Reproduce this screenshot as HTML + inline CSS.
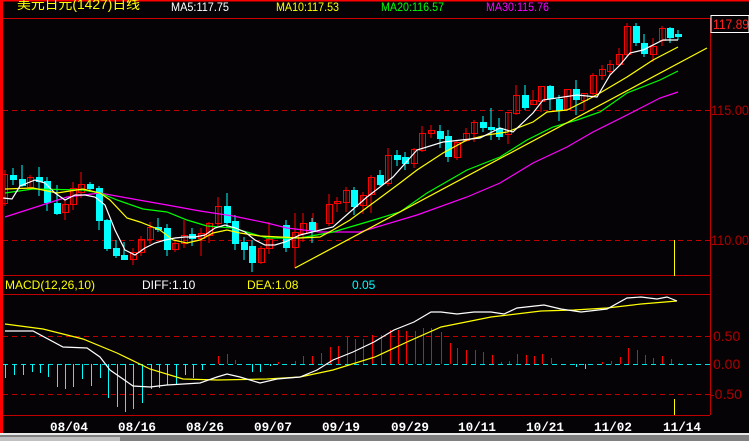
<!DOCTYPE html>
<html><head><meta charset="utf-8"><style>
html,body{margin:0;padding:0;background:#050306;}
svg{display:block}
text{font-family:"Liberation Sans","Noto Sans CJK SC",sans-serif;font-size:12px}
.d{font-family:"Liberation Mono",monospace;font-weight:bold;font-size:13px;fill:#fff}
.ax{font-size:14px}
</style></head><body>
<svg width="749" height="441" viewBox="0 0 749 441" xmlns="http://www.w3.org/2000/svg">
<rect width="749" height="441" fill="#050306"/>
<rect x="0" y="0" width="3" height="441" fill="#ff0000"/>
<rect x="0" y="0" width="749" height="1.5" fill="#ff0000"/>
<line x1="3" y1="18.5" x2="749" y2="18.5" stroke="#d00000" stroke-width="1"/>
<line x1="710.5" y1="18" x2="710.5" y2="415" stroke="#c00000"/>
<line x1="3" y1="275.5" x2="710" y2="275.5" stroke="#c00000"/>
<line x1="3" y1="294.5" x2="710" y2="294.5" stroke="#c00000"/>
<line x1="3" y1="415.5" x2="710" y2="415.5" stroke="#c00000"/>
<rect x="0" y="433" width="749" height="2" fill="#e8e8e8"/>
<rect x="0" y="435" width="749" height="6" fill="#808080"/>
<rect x="0" y="437" width="120" height="4" fill="#c0c0c0"/>
<g stroke="#c00000" stroke-dasharray="5,4">
<line x1="3" y1="110.5" x2="710" y2="110.5"/>
<line x1="3" y1="240.5" x2="710" y2="240.5"/>
<line x1="3" y1="336.5" x2="710" y2="336.5"/>
<line x1="3" y1="394.5" x2="710" y2="394.5"/>
</g>
<line x1="3" y1="364.5" x2="710" y2="364.5" stroke="#00e0e0" stroke-dasharray="5,4"/>
<text x="17" y="9" fill="#ffff00" style="font-size:14px" textLength="123" lengthAdjust="spacingAndGlyphs">美元日元(1427)日线</text>
<text x="171" y="11" fill="#ffffff" textLength="58" lengthAdjust="spacingAndGlyphs">MA5:117.75</text>
<text x="276" y="11" fill="#ffff00" textLength="63" lengthAdjust="spacingAndGlyphs">MA10:117.53</text>
<text x="381" y="11" fill="#00ff00" textLength="63" lengthAdjust="spacingAndGlyphs">MA20:116.57</text>
<text x="486" y="11" fill="#ff00ff" textLength="63" lengthAdjust="spacingAndGlyphs">MA30:115.76</text>
<rect x="711" y="15.5" width="38" height="17" fill="#050306" stroke="#ffffff"/>
<text class="ax" x="713" y="29" fill="#ff2020" textLength="36" lengthAdjust="spacingAndGlyphs">117.89</text>
<text class="ax" x="711" y="115" fill="#b00000" textLength="38" lengthAdjust="spacingAndGlyphs">115.00</text>
<text class="ax" x="711" y="245" fill="#b00000" textLength="38" lengthAdjust="spacingAndGlyphs">110.00</text>
<text class="ax" x="713" y="341" fill="#b00000">0.50</text>
<text class="ax" x="713" y="369" fill="#b00000">0.00</text>
<text class="ax" x="710" y="399" fill="#b00000">-0.50</text>
<g stroke-width="1">
<g stroke="#ff0000" fill="none">
<line x1="5" y1="170" x2="5" y2="206"/><rect x="2.5" y="174.5" width="5" height="29"/>
<line x1="30" y1="175" x2="30" y2="190"/><rect x="27.5" y="177.5" width="6" height="10"/>
<line x1="65" y1="200" x2="65" y2="220"/><rect x="62.5" y="204.5" width="6" height="8"/>
<line x1="73" y1="182" x2="73" y2="210"/><rect x="70.5" y="188.5" width="6" height="16"/>
<line x1="81" y1="172" x2="81" y2="198"/><rect x="78.5" y="184.5" width="6" height="8"/>
<line x1="133" y1="248" x2="133" y2="265"/><rect x="130.5" y="252.5" width="6" height="7"/>
<line x1="141" y1="236" x2="141" y2="256"/><rect x="138.5" y="239.5" width="6" height="13"/>
<line x1="150" y1="222" x2="150" y2="244"/><rect x="147.5" y="227.5" width="6" height="12"/>
<line x1="175" y1="240" x2="175" y2="252"/><rect x="172.5" y="243.5" width="6" height="6"/>
<line x1="184" y1="220" x2="184" y2="248"/><rect x="181.5" y="235.5" width="6" height="8"/>
<line x1="201" y1="228" x2="201" y2="256"/><rect x="198.5" y="233.5" width="6" height="5"/>
<line x1="209" y1="222" x2="209" y2="243"/><rect x="206.5" y="223.5" width="6" height="12"/>
<line x1="218" y1="197" x2="218" y2="226"/><rect x="215.5" y="206.5" width="6" height="17"/>
<line x1="261" y1="246" x2="261" y2="264"/><rect x="258.5" y="248.5" width="6" height="14"/>
<line x1="269" y1="222" x2="269" y2="254"/><rect x="266.5" y="239.5" width="6" height="9"/>
<line x1="295" y1="213" x2="295" y2="268"/><rect x="292.5" y="232.5" width="6" height="15"/>
<line x1="303" y1="213" x2="303" y2="242"/><rect x="300.5" y="223.5" width="6" height="10"/>
<line x1="313" y1="213" x2="313" y2="228"/><rect x="310.5" y="223.5" width="6" height="6"/>
<line x1="329" y1="194" x2="329" y2="226"/><rect x="326.5" y="204.5" width="6" height="19"/>
<line x1="337" y1="197" x2="337" y2="212"/><rect x="334.5" y="201.5" width="6" height="2"/>
<line x1="346" y1="187" x2="346" y2="212"/><rect x="343.5" y="190.5" width="6" height="12"/>
<line x1="363" y1="192" x2="363" y2="214"/><rect x="360.5" y="195.5" width="6" height="10"/>
<line x1="371" y1="175" x2="371" y2="213"/><rect x="368.5" y="177.5" width="6" height="17"/>
<line x1="388" y1="148" x2="388" y2="186"/><rect x="385.5" y="155.5" width="6" height="28"/>
<line x1="414" y1="148" x2="414" y2="168"/><rect x="411.5" y="149.5" width="6" height="14"/>
<line x1="422" y1="126" x2="422" y2="152"/><rect x="419.5" y="133.5" width="6" height="17"/>
<line x1="431" y1="125" x2="431" y2="138"/><rect x="428.5" y="130.5" width="6" height="3"/>
<line x1="457" y1="140" x2="457" y2="160"/><rect x="454.5" y="142.5" width="6" height="15"/>
<line x1="466" y1="128" x2="466" y2="142"/><rect x="463.5" y="133.5" width="6" height="7"/>
<line x1="474" y1="120" x2="474" y2="142"/><rect x="471.5" y="122.5" width="6" height="11"/>
<line x1="508" y1="112" x2="508" y2="144"/><rect x="505.5" y="112.5" width="6" height="22"/>
<line x1="516" y1="85" x2="516" y2="115"/><rect x="513.5" y="95.5" width="6" height="18"/>
<line x1="533" y1="90" x2="533" y2="105"/><rect x="530.5" y="100.5" width="6" height="4"/>
<line x1="541" y1="87" x2="541" y2="112"/><rect x="538.5" y="86.5" width="6" height="15"/>
<line x1="567" y1="89" x2="567" y2="111"/><rect x="564.5" y="89.5" width="6" height="20"/>
<line x1="584" y1="94" x2="584" y2="110"/><rect x="581.5" y="93.5" width="6" height="7"/>
<line x1="593" y1="73" x2="593" y2="98"/><rect x="590.5" y="75.5" width="6" height="18"/>
<line x1="602" y1="65" x2="602" y2="80"/><rect x="599.5" y="69.5" width="6" height="6"/>
<line x1="610" y1="60" x2="610" y2="75"/><rect x="607.5" y="64.5" width="6" height="7"/>
<line x1="619" y1="48" x2="619" y2="66"/><rect x="616.5" y="54.5" width="6" height="10"/>
<line x1="627" y1="23" x2="627" y2="57"/><rect x="624.5" y="26.5" width="6" height="28"/>
<line x1="653" y1="38" x2="653" y2="62"/><rect x="650.5" y="46.5" width="6" height="8"/>
<line x1="662" y1="26" x2="662" y2="46"/><rect x="659.5" y="28.5" width="6" height="12"/>
</g>
<g stroke="#00ffff" fill="#00ffff">
<line x1="13" y1="168" x2="13" y2="185"/><rect x="10.5" y="175.5" width="6" height="4"/>
<line x1="22" y1="165" x2="22" y2="187"/><rect x="19.5" y="179.5" width="6" height="6"/>
<line x1="39" y1="167" x2="39" y2="196"/><rect x="36.5" y="177.5" width="6" height="4"/>
<line x1="47" y1="177" x2="47" y2="211"/><rect x="44.5" y="181.5" width="6" height="21"/>
<line x1="57" y1="185" x2="57" y2="215"/><rect x="54.5" y="203.5" width="6" height="10"/>
<line x1="90" y1="182" x2="90" y2="192"/><rect x="87.5" y="184.5" width="6" height="4"/>
<line x1="99" y1="186" x2="99" y2="230"/><rect x="96.5" y="188.5" width="6" height="32"/>
<line x1="107" y1="219" x2="107" y2="251"/><rect x="104.5" y="220.5" width="6" height="28"/>
<line x1="116" y1="240" x2="116" y2="258"/><rect x="113.5" y="248.5" width="6" height="7"/>
<line x1="124" y1="242" x2="124" y2="260"/><rect x="121.5" y="255.5" width="6" height="4"/>
<line x1="158" y1="218" x2="158" y2="232"/><rect x="155.5" y="227.5" width="6" height="2"/>
<line x1="167" y1="224" x2="167" y2="256"/><rect x="164.5" y="228.5" width="6" height="21"/>
<line x1="192" y1="228" x2="192" y2="246"/><rect x="189.5" y="234.5" width="6" height="4"/>
<line x1="227" y1="193" x2="227" y2="228"/><rect x="224.5" y="206.5" width="6" height="16"/>
<line x1="235" y1="215" x2="235" y2="250"/><rect x="232.5" y="221.5" width="6" height="22"/>
<line x1="244" y1="237" x2="244" y2="260"/><rect x="241.5" y="242.5" width="6" height="7"/>
<line x1="252" y1="240" x2="252" y2="272"/><rect x="249.5" y="246.5" width="6" height="16"/>
<line x1="286" y1="220" x2="286" y2="252"/><rect x="283.5" y="225.5" width="6" height="22"/>
<line x1="312" y1="218" x2="312" y2="243"/><rect x="309.5" y="222.5" width="6" height="8"/>
<line x1="354" y1="187" x2="354" y2="215"/><rect x="351.5" y="190.5" width="6" height="16"/>
<line x1="380" y1="170" x2="380" y2="186"/><rect x="377.5" y="175.5" width="6" height="9"/>
<line x1="397" y1="150" x2="397" y2="166"/><rect x="394.5" y="155.5" width="6" height="4"/>
<line x1="405" y1="152" x2="405" y2="170"/><rect x="402.5" y="157.5" width="6" height="6"/>
<line x1="440" y1="125" x2="440" y2="148"/><rect x="437.5" y="131.5" width="6" height="7"/>
<line x1="448" y1="130" x2="448" y2="162"/><rect x="445.5" y="136.5" width="6" height="20"/>
<line x1="483" y1="116" x2="483" y2="132"/><rect x="480.5" y="122.5" width="6" height="5"/>
<line x1="491" y1="108" x2="491" y2="140"/><rect x="488.5" y="127.5" width="6" height="2"/>
<line x1="499" y1="118" x2="499" y2="140"/><rect x="496.5" y="128.5" width="6" height="8"/>
<line x1="525" y1="85" x2="525" y2="110"/><rect x="522.5" y="95.5" width="6" height="12"/>
<line x1="550" y1="85" x2="550" y2="110"/><rect x="547.5" y="86.5" width="6" height="12"/>
<line x1="559" y1="95" x2="559" y2="121"/><rect x="556.5" y="99.5" width="6" height="11"/>
<line x1="576" y1="80" x2="576" y2="115"/><rect x="573.5" y="89.5" width="6" height="10"/>
<line x1="636" y1="23" x2="636" y2="46"/><rect x="633.5" y="26.5" width="6" height="16"/>
<line x1="644" y1="34" x2="644" y2="57"/><rect x="641.5" y="43.5" width="6" height="10"/>
<line x1="670" y1="27" x2="670" y2="43"/><rect x="667.5" y="28.5" width="6" height="9"/>
<line x1="678" y1="30" x2="678" y2="40"/><rect x="675.5" y="34.5" width="6" height="2"/>
</g>
</g>
<g fill="none" stroke-width="1.2">
<polyline stroke="#ff00ff" points="5,217 33,208 67,197 100,193 133,199 167,205 200,211 233,216 267,223 287,228 320,232 360,232 417,215 467,197 500,183 533,163 567,147 593,132 627,115 660,98 678,92"/>
<polyline stroke="#00ff00" points="5,193 33,189 83,190 100,193 117,200 143,209 167,212 187,220 207,226 233,228 250,233 267,238 300,238 333,232 367,222 400,212 427,193 467,170 500,157 527,140 553,127 577,120 600,112 627,93 660,80 678,71"/>
<polyline stroke="#ffff00" points="5,189 33,188 57,193 83,189 100,193 110,200 127,218 140,222 160,230 173,240 187,243 200,240 213,233 227,230 240,233 260,236 280,237 300,238 320,237 333,230 350,220 373,203 400,183 417,170 443,153 467,140 487,135 507,132 533,122 547,112 567,110 587,100 600,93 627,77 653,60 678,47"/>
<polyline stroke="#ffffff" points="3,198 12,199 20,186 35,180 45,183 55,193 65,200 75,195 85,195 95,197 105,205 115,230 125,250 135,255 145,248 155,243 165,240 175,238 185,237 195,237 205,235 215,228 225,225 235,228 245,232 255,240 265,245 275,245 285,242 300,235 333,227 367,197 393,177 417,150 443,142 480,138 500,128 513,132 533,113 543,100 577,95 597,97 610,75 620,65 630,53 643,50 663,40 678,40"/>
<line x1="295" y1="268" x2="707" y2="48" stroke="#ffff00"/>
</g>
<line x1="674.5" y1="240" x2="674.5" y2="276" stroke="#ffff00"/>
<line x1="674.5" y1="399" x2="674.5" y2="415" stroke="#ffff00"/>
<text x="5" y="289" fill="#ffff00">MACD(12,26,10)</text>
<text x="142" y="289" fill="#ffffff">DIFF:1.10</text>
<text x="247" y="289" fill="#ffff00">DEA:1.08</text>
<text x="352" y="289" fill="#00ffff">0.05</text>
<g stroke="#00ffff" stroke-width="1">
<path d="M5.5 364V378M14.5 364V375M23.5 364V375M32.5 364V372M40.5 364V373M48.5 364V377M57.5 364V387M65.5 364V389M73.5 364V387M82.5 364V379M91.5 364V386M100.5 364V378M108.5 364V398M117.5 364V407M125.5 364V412M133.5 364V409M142.5 364V403M151.5 364V389M159.5 364V388M167.5 364V385M176.5 364V384M185.5 364V375M193.5 364V378M202.5 364V370M252.5 364V372M260.5 364V372M270.5 364V366M576.5 364V367M585.5 364V369"/>
</g>
<g stroke="#ff0000" stroke-width="1">
<path d="M218.5 364V356M227.5 364V354M235.5 364V360M278.5 364V362M295.5 364V361M303.5 364V356M312.5 364V356M321.5 364V353M330.5 364V347M338.5 364V346M347.5 364V337M355.5 364V339M363.5 364V339M372.5 364V335M381.5 364V335M390.5 364V330M398.5 364V330M406.5 364V331M415.5 364V331M423.5 364V328M431.5 364V328M441.5 364V332M450.5 364V343M457.5 364V348M466.5 364V350M475.5 364V350M483.5 364V352M492.5 364V355M501.5 364V362M509.5 364V361M517.5 364V354M526.5 364V355M534.5 364V356M542.5 364V354M551.5 364V358M602.5 364V362M611.5 364V361M620.5 364V357M628.5 364V348M637.5 364V350M645.5 364V355M653.5 364V358M662.5 364V356M671.5 364V359M679.5 364V363"/>
</g>
<g fill="none" stroke-width="1.2">
<polyline stroke="#ffff00" points="5,324 43,329 83,339 117,353 150,369 183,379 217,380 267,379 300,377 333,370 375,357 407,342 441,327 491,317 541,311 574,310 607,308 641,304 677,301"/>
<polyline stroke="#ffffff" points="5,331 33,331 63,347 87,348 100,357 110,370 133,386 150,387 167,385 200,383 217,377 227,374 240,377 260,383 277,379 300,377 317,370 333,360 353,352 374,342 394,330 414,322 431,312 441,312 457,314 474,312 491,312 504,314 517,308 544,305 561,309 581,312 607,309 627,298 641,297 657,299 667,297 677,301"/>
</g>
<text class="d" x="50" y="431" textLength="38" lengthAdjust="spacingAndGlyphs">08/04</text>
<text class="d" x="118" y="431" textLength="38" lengthAdjust="spacingAndGlyphs">08/16</text>
<text class="d" x="186" y="431" textLength="38" lengthAdjust="spacingAndGlyphs">08/26</text>
<text class="d" x="254" y="431" textLength="38" lengthAdjust="spacingAndGlyphs">09/07</text>
<text class="d" x="322" y="431" textLength="38" lengthAdjust="spacingAndGlyphs">09/19</text>
<text class="d" x="391" y="431" textLength="38" lengthAdjust="spacingAndGlyphs">09/29</text>
<text class="d" x="458" y="431" textLength="38" lengthAdjust="spacingAndGlyphs">10/11</text>
<text class="d" x="526" y="431" textLength="38" lengthAdjust="spacingAndGlyphs">10/21</text>
<text class="d" x="594" y="431" textLength="38" lengthAdjust="spacingAndGlyphs">11/02</text>
<text class="d" x="663" y="431" textLength="38" lengthAdjust="spacingAndGlyphs">11/14</text>
</svg>
</body></html>
